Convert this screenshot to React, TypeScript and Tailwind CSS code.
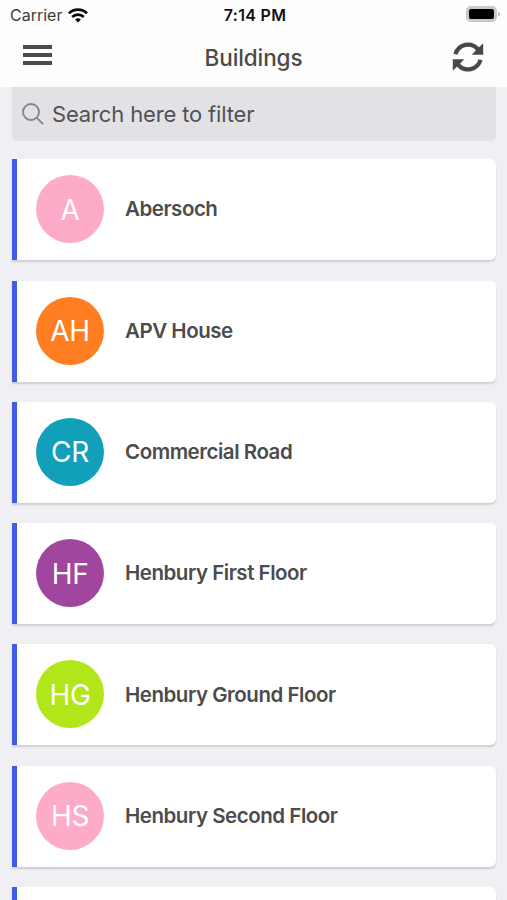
import React from 'react'

const buildings = [
  { name: 'Abersoch', initials: 'A', color: 'bg-[#fdabc8]' },
  { name: 'APV House', initials: 'AH', color: 'bg-[#ff7e22]' },
  { name: 'Commercial Road', initials: 'CR', color: 'bg-[#129fb9]' },
  { name: 'Henbury First Floor', initials: 'HF', color: 'bg-[#a0469f]' },
  { name: 'Henbury Ground Floor', initials: 'HG', color: 'bg-[#b1e61a]' },
  { name: 'Henbury Second Floor', initials: 'HS', color: 'bg-[#fdabc8]' },
  { name: '', initials: '', color: 'bg-[#ff7e22]' },
]

function WifiIcon() {
  return (
    <svg className="h-[15px] w-5" viewBox="0 0 20 15" fill="none" stroke="#0a0a0a" strokeWidth="2.7">
      <path d="M1 5.4a12.8 12.8 0 0 1 18 0" />
      <path d="M4.2 9a8.2 8.2 0 0 1 11.6 0" />
      <path d="M10 14.4 7.1 11.6a4.1 4.1 0 0 1 5.8 0z" fill="#0a0a0a" stroke="none" />
    </svg>
  )
}

function RefreshIcon() {
  return (
    <svg className="h-[30px] w-8" viewBox="0 0 32 30" fill="none" stroke="#484848" strokeWidth="4.2">
      <path d="M3.5 12.2A12.9 12.9 0 0 1 26 7.4" />
      <path d="M31.2 1.2v11.6H19.8l4-4.2 3.6-3.6z" fill="#484848" stroke="none" />
      <path d="M28.5 17.8A12.9 12.9 0 0 1 6 22.6" />
      <path d="M0.8 28.8V17.2h11.4l-4 4.2L4.6 25z" fill="#484848" stroke="none" />
    </svg>
  )
}

function StatusBar() {
  return (
    <div className="grid h-7 grid-cols-3 items-center pl-[10px] pr-[7px] pt-[2px]">
      <div className="flex items-center gap-[6px] text-[16px] text-[#3c3c3c]">
        Carrier
        <WifiIcon />
      </div>
      <div className="text-center text-[16px] font-semibold tracking-[0.3px] text-[#111111]">7:14 PM</div>
      <div className="flex items-center justify-end gap-px pb-[2px]">
        <div className="h-4 w-[31px] rounded-[5px] border-[3px] border-[#c9c9c9] bg-black" />
        <div className="h-1 w-[2px] rounded-r-full bg-[#b8b8b8]" />
      </div>
    </div>
  )
}

function NavBar() {
  return (
    <div className="grid h-[59px] grid-cols-3 items-center pl-[23px] pr-[23px]">
      <button className="flex w-[29px] flex-col gap-1 pb-[5px]" aria-label="Menu">
        <span className="h-1 bg-[#4c4c4c]" />
        <span className="h-1 bg-[#4c4c4c]" />
        <span className="h-1 bg-[#4c4c4c]" />
      </button>
      <h1 className="text-center text-[22.5px] font-medium tracking-[-0.1px] text-[#4a4a4a]">Buildings</h1>
      <button className="justify-self-end pb-px" aria-label="Refresh">
        <RefreshIcon />
      </button>
    </div>
  )
}

export default function App() {
  return (
    <div className="flex h-[900px] w-[507px] flex-col overflow-hidden whitespace-nowrap bg-[#f0eff4] font-['Inter',sans-serif]">
      <header className="shrink-0 bg-[#fdfdfd]">
        <StatusBar />
        <NavBar />
      </header>

      <main className="flex min-h-0 flex-1 flex-col pl-3 pr-[11px]">
        <div className="flex h-[54px] shrink-0 items-center gap-2 rounded-b-[6px] bg-[#e2e1e6] pl-[10px]">
          <svg className="h-[22px] w-[22px]" viewBox="0 0 22 22" fill="none" stroke="#85858a" strokeWidth="1.9">
            <circle cx="9" cy="9" r="8" />
            <path d="m14.8 14.8 6.4 6.4" />
          </svg>
          <span className="text-[22px] tracking-[-0.15px] text-[#515155]">Search here to filter</span>
        </div>

        <div className="mt-[18.3px] flex flex-col gap-[20.3px]">
          {buildings.map(({ name, initials, color }, i) => (
            <div
              key={i}
              className="flex h-[101px] shrink-0 items-center rounded-r-[6px] border-l-[5px] border-[#405ce4] bg-white pb-px pl-[19px] shadow-[0_2px_2px_rgba(0,0,0,0.14)]"
            >
              <div className={`flex h-[68px] w-[68px] items-center justify-center rounded-full pt-px text-[28px] tracking-[-0.3px] text-white ${color}`}>
                {initials}
              </div>
              <div className="ml-[21px] pt-px text-[20.5px] font-semibold tracking-[-0.47px] text-[#4c4c4c]">{name}</div>
            </div>
          ))}
        </div>
      </main>
    </div>
  )
}
